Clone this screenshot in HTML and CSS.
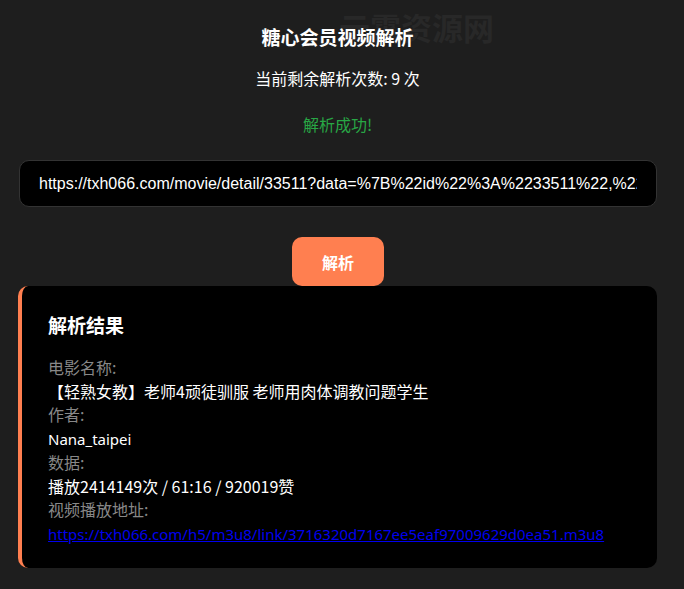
FILE: index.html
```html
<!DOCTYPE html>
<html lang="zh-CN">
<head>
<meta charset="utf-8">
<title>糖心会员视频解析</title>
<link rel="stylesheet" href="styles.css">
</head>
<body>
<div class="wrap">
  <div class="mark">云霄资源网</div>
  <h1 class="title">糖心会员视频解析</h1>
  <p class="quota">当前剩余解析次数: 9 次</p>
  <p class="status">解析成功!</p>
  <input class="url" type="text" value="https://txh066.com/movie/detail/33511?data=%7B%22id%22%3A%2233511%22,%22name%22">
  <div class="actions"><button class="btn">解析</button></div>
  <section class="result">
    <h2 class="result-title">解析结果</h2>
    <div class="label">电影名称:</div>
    <div class="value">【轻熟女教】老师4顽徒驯服 老师用肉体调教问题学生</div>
    <div class="label">作者:</div>
    <div class="value"><span class="latin">Nana_taipei</span></div>
    <div class="label">数据:</div>
    <div class="value">播放2414149次 / 61:16 / 920019赞</div>
    <div class="label">视频播放地址:</div>
    <div class="value"><a class="link latin" href="#">https://txh066.com/h5/m3u8/link/3716320d7167ee5eaf97009629d0ea51.m3u8</a></div>
  </section>
</div>
</body>
</html>
```
FILE: styles.css
```css
html, body {
  margin: 0;
  padding: 0;
  background: #1e1e1e;
}
body {
  font-family: "Noto Sans CJK SC", sans-serif;
  color: #fff;
}
.wrap {
  position: relative;
  width: 639px;
  margin-left: 18px;
  padding-top: 24px;
  padding-bottom: 20px;
  display: flex;
  flex-direction: column;
}
/* faint site watermark behind the heading */
.mark {
  position: absolute;
  left: 321px;
  top: 8px;
  font-size: 31px;
  line-height: 38px;
  font-weight: 700;
  color: #282828;
}
.title {
  position: relative;
  margin: 0;
  text-align: center;
  font-size: 19px;
  font-weight: 700;
  line-height: 26px;
}
.quota {
  margin: 17px 0 0;
  text-align: center;
  font-size: 16px;
  line-height: 22px;
}
.status {
  margin: 24px 0 0;
  text-align: center;
  font-size: 16px;
  line-height: 22px;
  color: #28a745;
}
.url {
  margin: 25px 0 0 1px;
  box-sizing: border-box;
  width: 638px;
  height: 47px;
  padding: 0 19px;
  background: #000;
  color: #fff;
  border: 1px solid #333;
  border-radius: 10px;
  font-family: "Liberation Sans", Arial, sans-serif;
  font-size: 16px;
  outline: none;
}
.actions {
  display: flex;
  justify-content: center;
  margin-top: 30px;
}
.btn {
  margin-left: 1px;
  width: 92px;
  height: 49px;
  border: none;
  border-radius: 10px;
  background: #ff7f50;
  color: #fff;
  font-family: "Noto Sans CJK SC", sans-serif;
  font-size: 16px;
  font-weight: 700;
}
.result {
  background: #000;
  border-left: 4px solid #ff7f50;
  border-radius: 10px;
  padding: 25px 26px 22px;
}
.result-title {
  margin: 0 0 17px;
  font-size: 19px;
  font-weight: 700;
  line-height: 28px;
}
.label {
  font-size: 16px;
  line-height: 22px;
  color: #888;
}
.value {
  margin-top: 2px;
  font-size: 16px;
  line-height: 23px;
  color: #fff;
}
.latin {
  font-family: "Noto Sans", sans-serif;
  font-size: 15px;
}
.link {
  color: #0000ee;
  text-decoration: underline;
}
```
